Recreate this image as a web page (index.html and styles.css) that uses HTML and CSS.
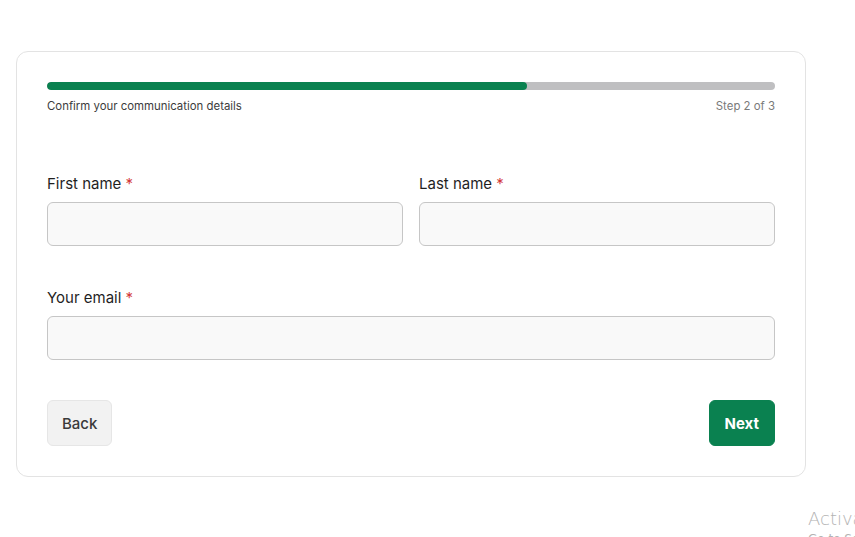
FILE: index.html
```html
<!DOCTYPE html>
<html lang="en">
<head>
<meta charset="utf-8">
<link rel="stylesheet" href="styles.css">
</head>
<body>
<main class="page">
  <section class="card">
    <div class="progress">
      <div class="progress-track"><div class="progress-fill" style="width:66%"></div></div>
      <div class="progress-meta">
        <span class="progress-title">Confirm your communication details</span>
        <span class="progress-step">Step 2 of 3</span>
      </div>
    </div>
    <form class="form">
      <div class="row two">
        <label class="field">
          <span class="label">First name <span class="req">*</span></span>
          <input class="input" type="text">
        </label>
        <label class="field">
          <span class="label">Last name <span class="req">*</span></span>
          <input class="input" type="text">
        </label>
      </div>
      <div class="row">
        <label class="field">
          <span class="label">Your email <span class="req">*</span></span>
          <input class="input" type="email">
        </label>
      </div>
      <div class="actions">
        <button type="button" class="btn btn-back">Back</button>
        <button type="button" class="btn btn-next">Next</button>
      </div>
    </form>
  </section>
</main>
<div class="watermark">
  <div class="wm-title">Activate Windows</div>
  <div class="wm-sub">Go to Settings to activate Windows.</div>
</div>
</body>
</html>
```
FILE: styles.css
```css
* { box-sizing: border-box; }
html, body { margin: 0; padding: 0; background: #fff; }
body {
  font-family: "Inter", "Open Sans", sans-serif;
  color: #1f1f1f;
  width: 855px;
  height: 537px;
  overflow: hidden;
  position: relative;
}
.page { padding: 51px 0 0 16px; }
.card {
  width: 790px;
  border: 1px solid #e3e3e3;
  border-radius: 12px;
  padding: 30px;
  background: #fff;
}
.progress-track {
  height: 8px;
  background: #bfbfc1;
  border-radius: 4px;
  overflow: hidden;
}
.progress-fill {
  height: 100%;
  background: #0a8150;
  border-radius: 4px;
}
.progress-meta {
  display: flex;
  justify-content: space-between;
  margin-top: 9px;
  font-size: 11.4px;
  line-height: 14px;
}
.progress-title { color: #3c3c3c; }
.progress-step { color: #7a7a7a; }
.form { margin-top: 60px; }
.row { display: flex; gap: 16px; margin-bottom: 41px; }
.row.two .field { flex: 1; }
.field { display: flex; flex-direction: column; flex: 1; }
.label {
  font-size: 15px;
  line-height: 21px;
  color: #1f1f1f;
  margin-bottom: 8px;
}
.req { color: #d33a3a; }
.input {
  height: 44px;
  border: 1px solid #c6c6c6;
  border-radius: 6px;
  background: #f9f9f9;
  font: inherit;
  padding: 0 12px;
  width: 100%;
}
.actions {
  display: flex;
  justify-content: space-between;
}
.row + .actions { margin-top: -1px; }
.btn {
  height: 46px;
  border-radius: 6px;
  font-family: inherit;
  font-size: 15px;
  padding: 0 14px;
  cursor: pointer;
}
.btn-back {
  background: #f2f2f2;
  border: 1px solid #e6e6e6;
  color: #3a3a3a;
  font-weight: 500;
}
.btn-next {
  background: #0a8150;
  border: 1px solid #0a8150;
  color: #fff;
  font-weight: 700;
  padding: 0 15px;
}
.watermark {
  position: absolute;
  left: 808px;
  top: 507px;
  font-family: "DejaVu Sans", sans-serif;
  color: #b3b3b3;
  white-space: nowrap;
}
.wm-title { font-size: 18px; line-height: 24px; font-weight: 300; }
.wm-sub { font-size: 12px; line-height: 16px; }
```
